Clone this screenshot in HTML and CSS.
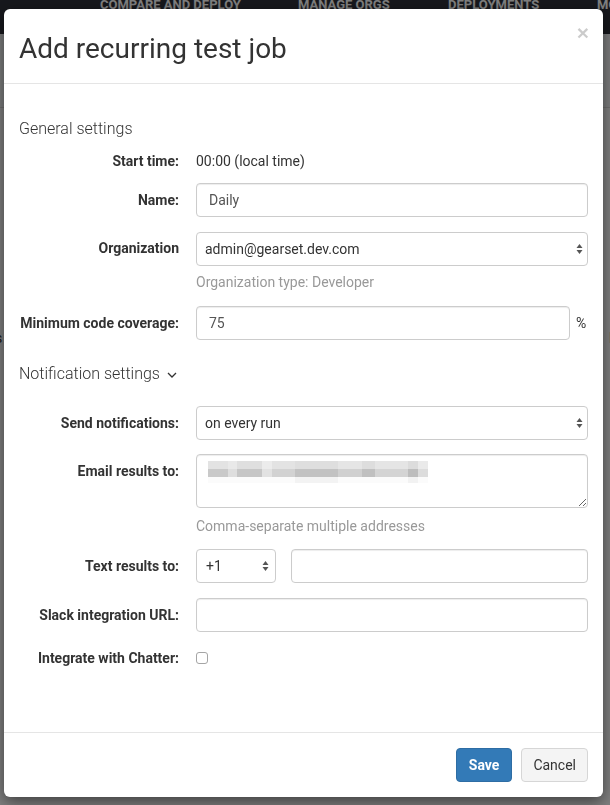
FILE: index.html
```html
<!DOCTYPE html>
<html lang="en">
<head>
    <meta charset="UTF-8">
    <meta name="viewport" content="width=device-width, initial-scale=1.0">
    <title>Add recurring test job</title>
    <link rel="stylesheet" href="styles.css">
</head>
<body>
    <!-- page behind the dialog -->
    <div class="page">
        <div class="navbar">
            <span>COMPARE AND DEPLOY</span>
            <span>MANAGE ORGS</span>
            <span>DEPLOYMENTS</span>
            <span>MONITORING</span>
        </div>
        <div class="page-toolbar"></div>
        <div class="page-row">
            <span>Tests</span>
            <span>Repos</span>
        </div>
    </div>
    <div class="backdrop"></div>

    <div class="modal">
        <div class="modal-header">
            <h4 class="modal-title">Add recurring test job</h4>
            <button type="button" class="close">&times;</button>
        </div>

        <div class="modal-body">
            <h5 class="section-title">General settings</h5>

            <div class="form-row static-row">
                <label class="control-label">Start time:</label>
                <div class="static-value">00:00 (local time)</div>
            </div>

            <div class="form-row name-row">
                <label class="control-label">Name:</label>
                <input type="text" class="form-control" value="Daily">
            </div>

            <div class="form-row org-row">
                <label class="control-label">Organization</label>
                <div>
                    <div class="select-wrap">
                        <select class="form-control">
                            <option>admin@gearset.dev.com</option>
                        </select>
                        <span class="select-arrows"><svg width="7" height="12" viewBox="0 0 7 12"><path d="M3.5 1 L6.5 5 L0.5 5 Z M3.5 11 L6.5 7 L0.5 7 Z" fill="#555"/></svg></span>
                    </div>
                    <div class="help-block org-help">Organization type: Developer</div>
                </div>
            </div>

            <div class="form-row coverage-row">
                <label class="control-label">Minimum code coverage:</label>
                <div class="addon-group">
                    <input type="text" class="form-control" value="75">
                    <span class="addon">%</span>
                </div>
            </div>

            <h5 class="section-title notify-title">Notification settings
                <svg class="chevron" width="10" height="6" viewBox="0 0 10 6"><path d="M1 1 L5 5 L9 1" fill="none" stroke="#333" stroke-width="1.3"/></svg>
            </h5>

            <div class="form-row send-row">
                <label class="control-label">Send notifications:</label>
                <div class="select-wrap">
                    <select class="form-control">
                        <option>on every run</option>
                    </select>
                    <span class="select-arrows"><svg width="7" height="12" viewBox="0 0 7 12"><path d="M3.5 1 L6.5 5 L0.5 5 Z M3.5 11 L6.5 7 L0.5 7 Z" fill="#555"/></svg></span>
                </div>
            </div>

            <div class="form-row email-row">
                <label class="control-label">Email results to:</label>
                <div>
                    <div class="textarea-wrap">
                        <textarea class="form-control email-box"></textarea>
                        <div class="redacted">
                            <div class="redacted-line line-1"></div>
                            <div class="redacted-line line-2"></div>
                            <div class="redacted-line line-3"></div>
                        </div>
                    </div>
                    <div class="help-block email-help">Comma-separate multiple addresses</div>
                </div>
            </div>

            <div class="form-row sms-row">
                <label class="control-label">Text results to:</label>
                <div class="phone-group">
                    <div class="select-wrap code-select">
                        <select class="form-control">
                            <option>+1</option>
                        </select>
                        <span class="select-arrows"><svg width="7" height="12" viewBox="0 0 7 12"><path d="M3.5 1 L6.5 5 L0.5 5 Z M3.5 11 L6.5 7 L0.5 7 Z" fill="#555"/></svg></span>
                    </div>
                    <input type="text" class="form-control">
                </div>
            </div>

            <div class="form-row slack-row">
                <label class="control-label">Slack integration URL:</label>
                <input type="text" class="form-control">
            </div>

            <div class="form-row chatter-row">
                <label class="control-label">Integrate with Chatter:</label>
                <div><input type="checkbox" class="checkbox"></div>
            </div>
        </div>

        <div class="modal-footer">
            <button type="button" class="btn btn-primary">Save</button>
            <button type="button" class="btn btn-default">Cancel</button>
        </div>
    </div>
</body>
</html>
```

FILE: styles.css
```css
* {
    margin: 0;
    padding: 0;
    box-sizing: border-box;
}

body {
    font-family: Roboto, "Liberation Sans", Arial, sans-serif;
    font-size: 14px;
    line-height: 20px;
    color: #333;
    background: #fff;
    height: 805px;
    overflow: hidden;
}

/* page behind the dialog */
.navbar {
    height: 34px;
    background: #2e3039;
    display: grid;
    grid-template-columns: 198px 150px 149px 120px;
    padding-left: 100px;
    overflow: hidden;
}

.navbar span {
    color: #fff;
    font-weight: 700;
    font-size: 13px;
    line-height: 13px;
    margin-top: -2px;
    white-space: nowrap;
}

.page-toolbar {
    height: 74px;
    border-bottom: 1px solid #ddd;
    background: #f7f9fb;
}

.page-row {
    display: flex;
    justify-content: space-between;
    width: 680px;
    margin-left: -32px;
    margin-top: 220px;
    font-size: 14px;
}

.backdrop {
    position: fixed;
    inset: 0;
    background: rgba(0, 0, 0, 0.5);
}

/* dialog */
.modal {
    position: fixed;
    top: 9px;
    left: 4px;
    width: 599px;
    background: #fff;
    border-radius: 6px;
    box-shadow: 0 5px 15px rgba(0, 0, 0, 0.5);
}

.modal-header {
    display: flex;
    justify-content: space-between;
    align-items: flex-start;
    padding: 15px;
    height: 75px;
    border-bottom: 1px solid #e5e5e5;
}

.modal-title {
    font-size: 28px;
    font-weight: 400;
    line-height: 44px;
    margin-top: 3px;
    color: #333;
}

.close {
    background: none;
    border: none;
    font-family: "Liberation Sans", Arial, sans-serif;
    font-size: 21px;
    font-weight: 700;
    line-height: 1;
    color: #000;
    opacity: 0.2;
    margin-top: -2px;
    margin-right: -1px;
}

.modal-body {
    padding: 15px;
    height: 648px;
}

.section-title {
    font-size: 16px;
    font-weight: 300;
    line-height: 22px;
    color: #333;
    margin-top: 19px;
    display: flex;
    align-items: center;
}

.chevron {
    margin-left: 7px;
    margin-top: 2px;
}

.form-row {
    display: grid;
    grid-template-columns: 160px 1fr;
    column-gap: 17px;
    align-items: start;
}

.control-label {
    text-align: right;
    font-weight: 700;
    padding-top: 7px;
    white-space: nowrap;
}

.static-row {
    margin-top: 11px;
}

.static-row .control-label {
    padding-top: 0;
}

.name-row {
    margin-top: 12px;
}

.org-row {
    margin-top: 15px;
}

.org-row .control-label {
    padding-top: 6px;
}

.coverage-row {
    margin-top: 14px;
}

.notify-title {
    margin-top: 23px;
}

.send-row {
    margin-top: 21px;
}

.email-row {
    margin-top: 14px;
}

.sms-row {
    margin-top: 13px;
}

.slack-row {
    margin-top: 15px;
}

.chatter-row {
    margin-top: 16px;
}

.chatter-row .control-label {
    padding-top: 0;
}

.form-control {
    display: block;
    width: 100%;
    height: 34px;
    padding: 6px 12px;
    font-family: inherit;
    font-size: 14px;
    line-height: 20px;
    color: #555;
    background: #fff;
    border: 1px solid #ccc;
    border-radius: 4px;
    box-shadow: inset 0 1px 1px rgba(0, 0, 0, 0.075);
    outline: none;
}

.select-wrap {
    position: relative;
}

.select-wrap select {
    appearance: none;
    -webkit-appearance: none;
    padding-left: 8px;
    color: #333;
    box-shadow: none;
}

.select-arrows {
    position: absolute;
    right: 5px;
    top: 11px;
    line-height: 0;
}

.help-block {
    color: #999;
}

.org-help {
    margin-top: 6px;
}

.email-help {
    margin-top: 8px;
}

.addon-group {
    display: flex;
}

.addon {
    width: 18px;
    flex: none;
    padding-left: 6px;
    padding-top: 7px;
    color: #333;
}

.textarea-wrap {
    position: relative;
}

.email-box {
    height: 54px;
    resize: vertical;
}

/* pixelated, redacted address */
.redacted {
    position: absolute;
    left: 12px;
    top: 7px;
    width: 220px;
}

.redacted-line {
    height: 8px;
}

.line-1 {
    background: linear-gradient(to right,
        #e3e3e3 0 20px, #e9e9e9 20px 29px, #dfdfdf 29px 54px, #ececec 54px 64px,
        #e3e3e3 64px 87px, #dedede 87px 130px, #e5e5e5 130px 154px, #dddddd 154px 167px,
        #e5e5e5 167px 200px, #dcdcdc 200px 210px, #eaeaea 210px 220px);
}

.line-2 {
    background: linear-gradient(to right,
        #c9c9c9 0 20px, #dedede 20px 29px, #c6c6c6 29px 54px, #e2e2e2 54px 64px,
        #d2d2d2 64px 87px, #c2c2c2 87px 130px, #d0d0d0 130px 154px, #c0c0c0 154px 167px,
        #d4d4d4 167px 200px, #bdbdbd 200px 210px, #dcdcdc 210px 220px);
}

.line-3 {
    height: 6px;
    background: linear-gradient(to right,
        #fbfbfb 0 87px, #f3f3f3 87px 130px, #fbfbfb 130px 200px, #f2f2f2 200px 210px, #fbfbfb 210px 220px);
}

.phone-group {
    display: grid;
    grid-template-columns: 80px 1fr;
    column-gap: 15px;
}

.code-select select {
    padding-left: 9px;
}

.code-select .select-arrows {
    right: 7px;
}

.checkbox {
    appearance: none;
    -webkit-appearance: none;
    display: block;
    width: 12px;
    height: 12px;
    margin-top: 4px;
    border: 1px solid #a5a5a5;
    border-radius: 3px;
    background: #fff;
}

.modal-footer {
    display: flex;
    justify-content: flex-end;
    gap: 9px;
    padding: 15px;
    border-top: 1px solid #e5e5e5;
}

.btn {
    height: 34px;
    padding: 6px 12px;
    font-family: inherit;
    font-size: 14px;
    line-height: 20px;
    border-radius: 4px;
    border: 1px solid transparent;
}

.btn-primary {
    background: #337ab7;
    border-color: #2e6da4;
    color: #fff;
    font-weight: 700;
    padding: 6px 12px;
}

.btn-default {
    background: #f4f4f4;
    border-color: #d6d6d6;
    color: #333;
    padding: 6px 11px;
}
```
